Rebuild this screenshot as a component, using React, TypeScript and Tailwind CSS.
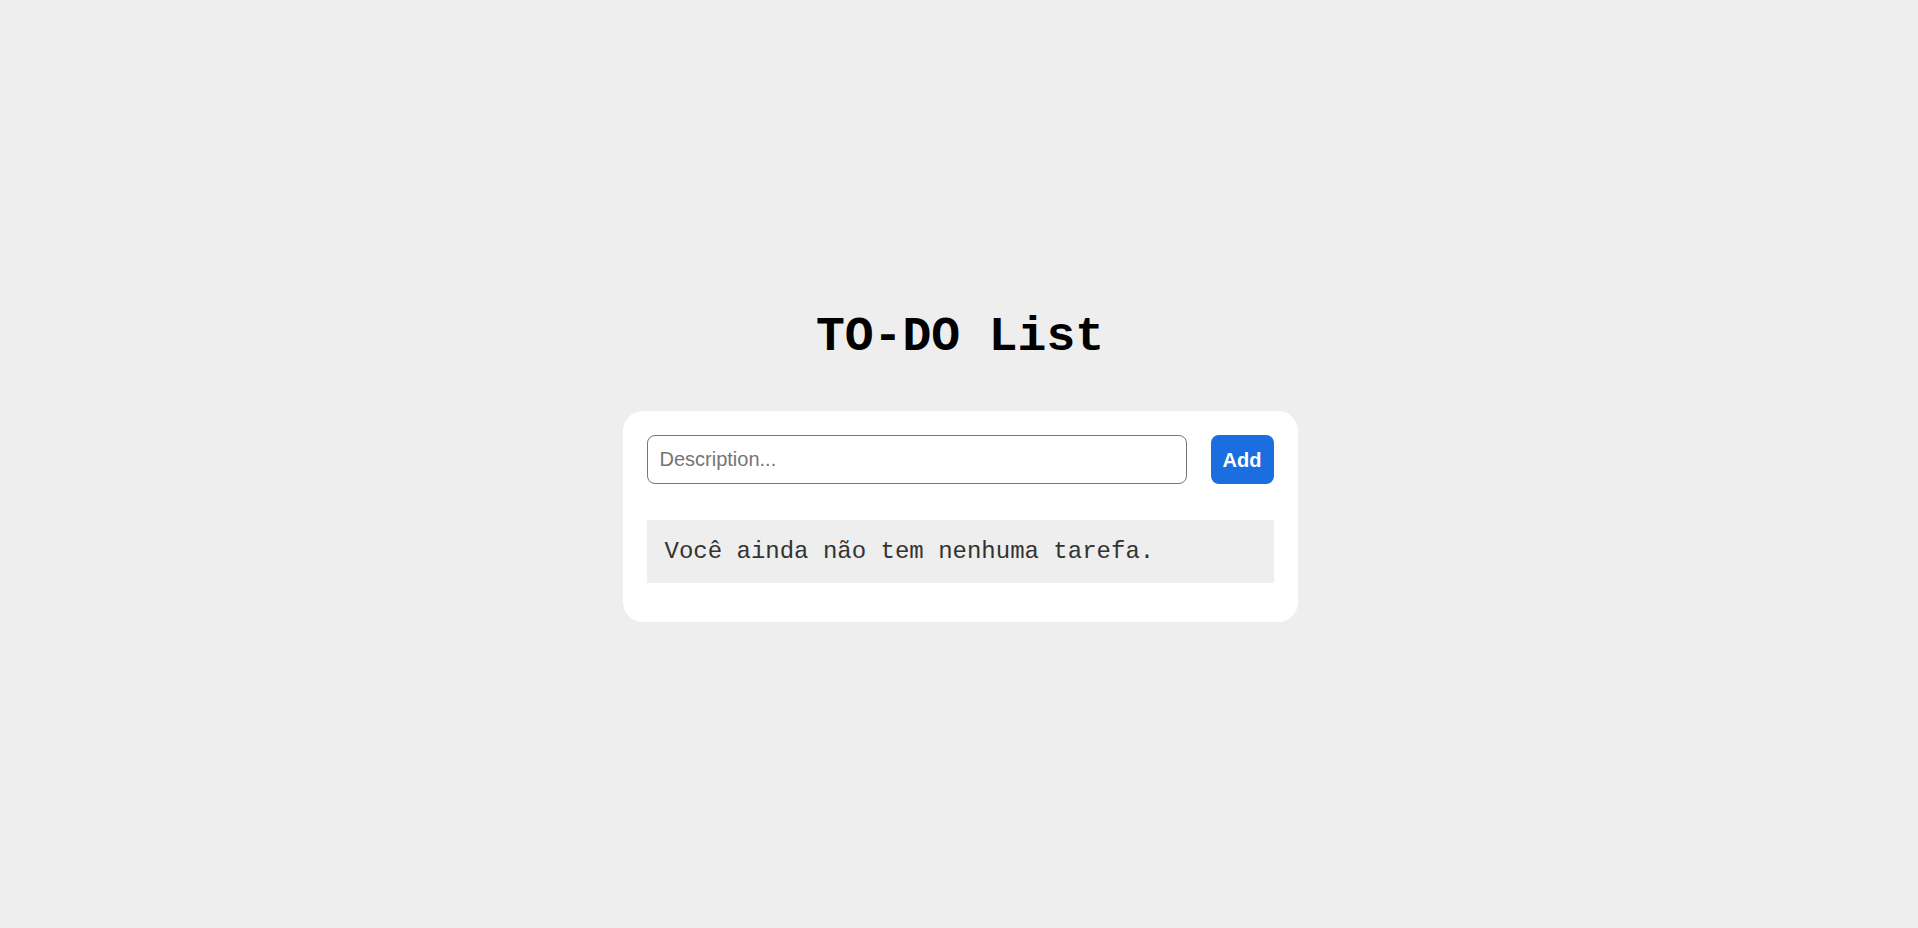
import { useState } from "react";

export default function App() {
  const [description, setDescription] = useState("");
  const [tasks, setTasks] = useState<string[]>([]);

  const addTask = () => {
    const text = description.trim();
    if (!text) return;
    setTasks([...tasks, text]);
    setDescription("");
  };

  return (
    <main className="flex min-h-screen flex-col items-center justify-center bg-[#eeeeee] pt-[4px] pl-[2px]">
      <h1 className="mb-[47px] font-['Liberation_Mono','Courier_New',monospace] text-[48px] font-bold leading-[54px] text-black">
        TO-DO List
      </h1>

      <section className="w-[675px] rounded-[20px] bg-white px-6 pt-6 pb-[39px]">
        <div className="flex gap-6">
          <input
            value={description}
            onChange={(e) => setDescription(e.target.value)}
            onKeyDown={(e) => e.key === "Enter" && addTask()}
            placeholder="Description..."
            className="h-[49px] flex-1 rounded-lg border border-[#767676] bg-white px-3 font-['Liberation_Sans',Arial,sans-serif] text-[20px] text-black outline-none placeholder:text-[#757575]"
          />
          <button
            onClick={addTask}
            className="h-[49px] rounded-lg bg-[#1a6ee0] px-3 font-['Liberation_Sans',Arial,sans-serif] text-[20px] font-bold text-white"
          >
            Add
          </button>
        </div>

        <ul className="mt-[36px]">
          {tasks.length === 0 ? (
            <li className="bg-[#eeeeee] p-[18px] font-['Liberation_Mono','Courier_New',monospace] text-[24px] leading-[27px] text-[#333]">
              Você ainda não tem nenhuma tarefa.
            </li>
          ) : (
            tasks.map((task, i) => (
              <li
                key={i}
                className="mb-2 bg-[#eeeeee] p-[18px] font-['Liberation_Mono','Courier_New',monospace] text-[24px] leading-[27px] text-[#333]"
              >
                {task}
              </li>
            ))
          )}
        </ul>
      </section>
    </main>
  );
}
